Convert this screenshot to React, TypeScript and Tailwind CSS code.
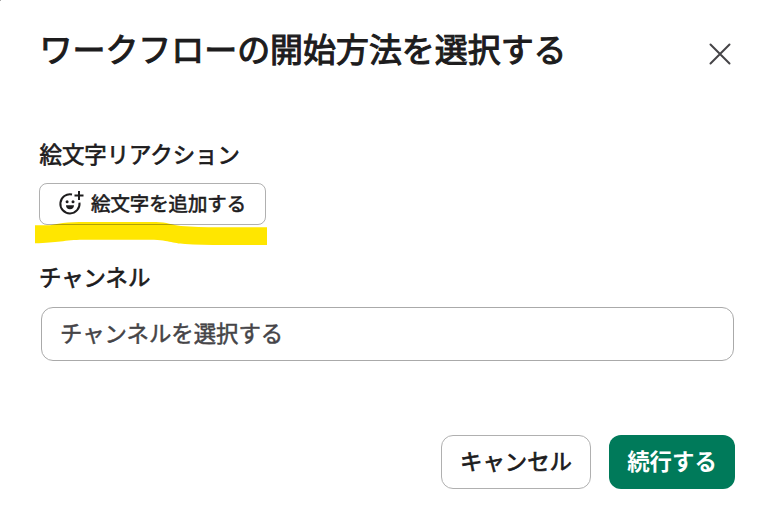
function EmojiAddIcon() {
  return (
    <svg className="h-[26px] w-[26px] shrink-0" viewBox="0 0 26 26" fill="none" stroke="#1d1c1d" strokeWidth="2">
      <path d="M14 3.400a9.600 9.600 0 1 0 7.500 8.300" />
      <path d="M21 0v9M16.500 4.500h9" />
      <circle cx="9.100" cy="10.700" r="1.500" fill="#1d1c1d" stroke="none" />
      <circle cx="15" cy="10.700" r="1.500" fill="#1d1c1d" stroke="none" />
      <path d="M8 14.200h8c0 2.500-1.700 4.100-4 4.100s-4-1.600-4-4.100Z" fill="#1d1c1d" stroke="none" />
    </svg>
  );
}

export default function App() {
  return (
    <main
      lang="ja"
      className="relative flex h-[520px] w-[772px] flex-col overflow-hidden bg-white pr-[37px] pl-[39px] font-['Noto_Sans_CJK_JP',sans-serif] font-normal text-[#1d1c1d]"
    >
      <span className="absolute top-0 left-0 h-px w-px bg-[#aaa]" />
      <header className="flex h-[100px] items-start justify-between pt-[23px]">
        <h1 className="ml-[0.500px] text-[32.950px] leading-[49px] whitespace-nowrap [-webkit-text-stroke:1.100px_#1d1c1d]">ワークフローの開始方法を選択する</h1>
        <button aria-label="閉じる" className="mt-[20px] mr-[4px]">
          <svg className="h-[22px] w-[22px]" viewBox="0 0 22 22" fill="none" stroke="#454447" strokeWidth="2" strokeLinecap="round">
            <path d="m1.500 1.500 19 19m0-19-19 19" />
          </svg>
        </button>
      </header>

      <section className="pt-[37px]">
        <h2 className="ml-[0.500px] h-[46px] text-[22.400px] leading-[33px] [-webkit-text-stroke:0.700px_#1d1c1d]">絵文字リアクション</h2>
        <div className="relative w-[227px]">
          <svg className="absolute top-[38px] -left-[4px] h-[25px] w-[232px]" viewBox="0 0 232 25">
            <path
              d="M0 4.200H15C20 3.500 26 2.100 33 1.500L44 1H121C132 1.200 137 4 146 5Q164 6.500 190 6.300H232V24H190Q165 24 150 23C137 22.500 134 18.800 112 18.800H48C30 19 22 22 0 22.300Z"
              fill="#ffe600"
            />
          </svg>
          <button className="relative flex h-[42px] w-[227px] items-center rounded-[8px] border border-[#1d1c1d]/35 pl-[18px] text-[19.400px] leading-[28px] whitespace-nowrap">
            <EmojiAddIcon />
            <span className="-mt-[2px] ml-[7px] [-webkit-text-stroke:0.600px_#1d1c1d]">絵文字を追加する</span>
          </button>
        </div>
      </section>

      <section className="pt-[35px]">
        <h2 className="h-[47px] text-[22.400px] leading-[33px] [-webkit-text-stroke:0.700px_#1d1c1d]">チャンネル</h2>
        <div className="ml-[2px] flex h-[54px] w-[693px] items-center rounded-[12px] border border-[#aaa] pb-[2px] pl-[18px] text-[22.400px] text-[#454447] [-webkit-text-stroke:0.500px_#454447]">
          チャンネルを選択する
        </div>
      </section>

      <footer className="mt-[74px] flex justify-end gap-[18px] text-[22.400px]">
        <button className="h-[54px] w-[150px] rounded-[12px] border border-[#b0b0b0] pb-[2px] [-webkit-text-stroke:0.700px_#1d1c1d]">キャンセル</button>
        <button className="h-[54px] w-[126px] rounded-[12px] bg-[#007a5a] pb-[2px] font-bold text-white">続行する</button>
      </footer>
    </main>
  );
}
